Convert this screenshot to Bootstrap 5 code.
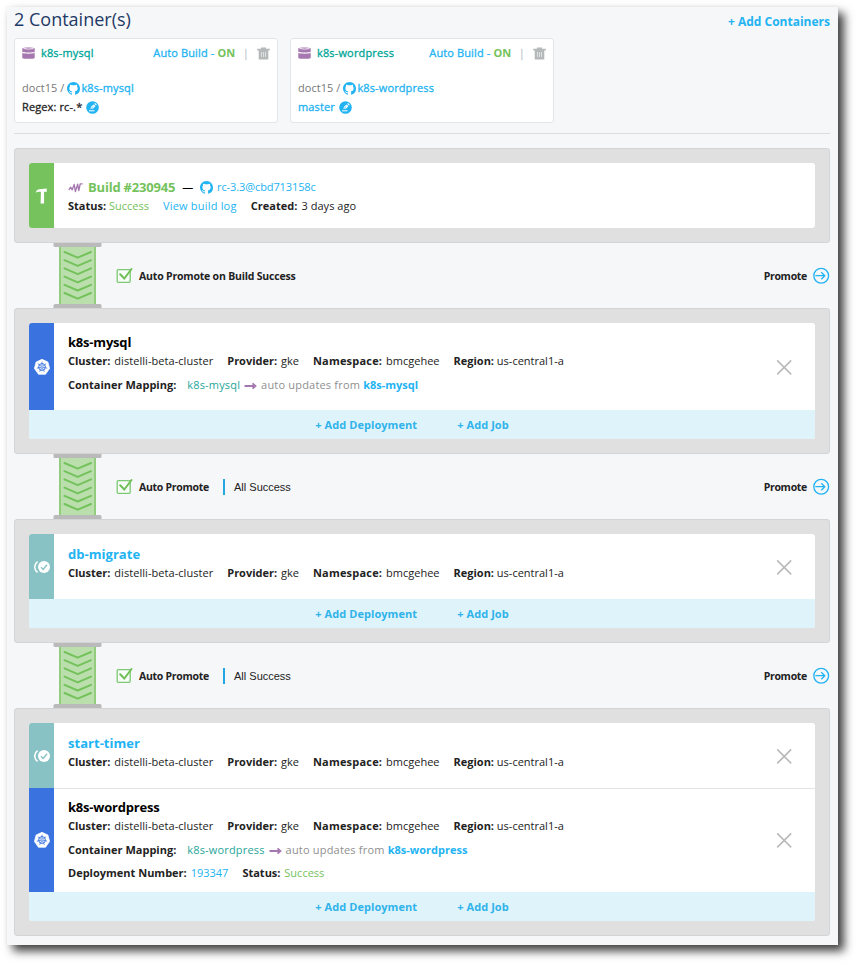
<!DOCTYPE html>
<html lang="en">
<head>
<meta charset="utf-8">
<meta name="viewport" content="width=device-width, initial-scale=1">
<title>Pipeline</title>
<link href="https://cdn.jsdelivr.net/npm/bootstrap@5.3.0/dist/css/bootstrap.min.css" rel="stylesheet">
<style>
body{background:#fff;font-family:"Open Sans","Noto Sans",sans-serif;font-size:11px;line-height:18px;color:#222;min-height:968px;padding:7px 0 0 7px}
a{text-decoration:none;color:#22b3f2}
svg{display:block;flex:none}
.panel{width:831px;height:938px;padding:0 8px 0 7px;background:#f6f7f9;box-shadow:6px 6px 9px rgba(0,0,0,.75),0 0 5px rgba(0,0,0,.05)}
.page-title{font-size:18px;line-height:24px;height:26px;color:#1e3a66;font-weight:400}
.add-top{font-size:12px;font-weight:700;padding-top:6px;height:26px}
.repos{gap:12px;padding-top:5px}
.repo{width:264px;height:85px;border:1px solid #e3e5e7;border-radius:3px;padding:5px 7px 0;letter-spacing:.12px;-webkit-text-stroke:.3px currentColor}
.repo b{-webkit-text-stroke:0}
.repo .name{color:#00a698;padding-left:6px;letter-spacing:.15px}
.repo .sep{color:#c6cdd4;margin:0 8px 0 7.500px}
.row2{margin-top:17px}.row3{margin-top:1px}
.owner{-webkit-text-stroke:0;letter-spacing:.05px}
.gh-link{margin-left:1px}
.gh-ico{margin-left:3px}
.teal{color:#1fa699}.grn{color:#74c25c}.gry{color:#777}.gry2{color:#8f8f8f}
.rule{height:1px;background:#dbdddf;margin:10px 0 14px}
.stage{background:#e0e0e0;border:1px solid #d2d4d6;border-radius:3px;padding:14px}
.box{border-radius:3px;overflow:hidden;background:#fff}
.side{width:25px;flex:none}
.side.build{background:#76c25d}.side.kube{background:#3a72e0}.side.job{background:#88c2c4}
.line{height:18px;white-space:nowrap}
.info{padding-left:14px;padding-top:9px}
.build-info{padding-top:14px}.job-info{padding-top:10px}
.h65{height:65px}.h87{height:87px}.h104{height:104px}
.ttl{font-size:13px;font-weight:700;color:#000;height:20px;line-height:20px;letter-spacing:-.2px}
.ttl a{letter-spacing:.03px}
.ttl .grn{margin-left:1px}
.ttl .sha{font-size:11px;font-weight:400;letter-spacing:-.1px}
.dash{font-size:11px;font-weight:400;margin:0 7px}
.g14{gap:14px}
.meta b{margin-right:1px}
.meta .val{letter-spacing:.05px}
.meta .ns{letter-spacing:.2px}
.meta .st{margin-right:0}
.log{letter-spacing:.2px}
.mapping{margin-top:6px}
.mapping b{margin-right:11px}
.mapping .teal{letter-spacing:.17px}
.mapping .gry2{letter-spacing:.19px}
.mapping svg{margin:1px 4px 0}
.deploy{margin-top:5px}
.addbar{height:29px;background:#dff3fb;gap:40px;font-weight:700;padding-right:20px;letter-spacing:.07px}
.addbar a{color:#2fb3ea}
.link{height:65px;padding-left:39px}
.link b{font-size:10.5px;letter-spacing:-.19px}
.link .pipe{margin-right:14px}
.link .lbl{margin-left:6px}
.link .short{letter-spacing:-.28px}
.link .prm{letter-spacing:-.3px}
.link .go{margin-left:6px}
.vbar{width:2px;height:16px;background:#22a7e0;margin:0 9px 0 14px}
.arial{font-family:"Liberation Sans",Arial,sans-serif}
.close-x{margin-right:23px}
.split{box-shadow:inset 0 1px #e2e4e6}
</style>
</head>
<body>
<svg width="0" height="0" class="position-absolute">
<defs>
<symbol id="gh" viewBox="0 0 16 16"><path fill="#22b3f2" d="M8 0C3.58 0 0 3.58 0 8c0 3.54 2.29 6.53 5.47 7.59.4.07.55-.17.55-.38 0-.19-.01-.82-.01-1.49-2.01.37-2.53-.49-2.69-.94-.09-.23-.48-.94-.82-1.13-.28-.15-.68-.52-.01-.53.63-.01 1.08.58 1.23.82.72 1.21 1.87.87 2.33.66.07-.52.28-.87.51-1.07-1.78-.2-3.64-.89-3.64-3.95 0-.87.31-1.59.82-2.15-.08-.2-.36-1.02.08-2.12 0 0 .67-.21 2.2.82.64-.18 1.32-.27 2-.27s1.36.09 2 .27c1.53-1.04 2.2-.82 2.2-.82.44 1.1.16 1.92.08 2.12.51.56.82 1.27.82 2.15 0 3.07-1.87 3.75-3.65 3.95.29.25.54.73.54 1.48 0 1.07-.01 1.93-.01 2.2 0 .21.15.46.55.38A8.01 8.01 0 0 0 16 8c0-4.42-3.58-8-8-8z"/></symbol>
<symbol id="db" viewBox="0 0 13 12"><path fill="#a678b0" d="M.3 1.300C1 .2 12 .2 12.700 1.300V5C11 5.600 2 5.600.3 5zM.3 6.100C3 6.900 10 6.900 12.700 6.100V10.900C11 12.100 2 12.100.3 10.900z"/><path d="M1.500 1.500Q6.500 2.700 11.500 1.500" stroke="#f1e8f3" stroke-width="1" fill="none"/></symbol>
<symbol id="trash" viewBox="0 0 13 13"><path fill="#b5b9ba" d="M4 .5h5v1.300h3.800v1.600H.2V1.800H4zM1.700 3.400h9.600V12.500H1.700z"/><path d="M4.500 5v5M6.500 5v5M8.500 5v5" stroke="#e9ebeb" stroke-width=".8"/></symbol>
<symbol id="edit" viewBox="0 0 13 13"><circle cx="6.500" cy="6.500" r="6.300" fill="#22b3f2"/><path d="M4.200 8.300L5.200 5.600L7.600 3.400L9.500 5L7.200 7.600zM8.200 2.800L9 2.100L10.800 3.700L10.100 4.500z" fill="#fff"/><path d="M3 9.800H8.500" stroke="#fff" stroke-width="1"/><path d="M4.500 8L7.300 5.400" stroke="#22b3f2" stroke-width=".7"/></symbol>
<symbol id="pulse" viewBox="0 0 15 11"><path d="M.8 8L2.600 5.200L4.200 7.800L6.200 2.500L7.400 9.600L9.600 2.200L10.800 8.500L12.200 1.800H14.600" fill="none" stroke="#a678b0" stroke-width="1.350" stroke-linejoin="round"/></symbol>
<symbol id="hammer" viewBox="0 0 13 18"><path fill="#fff" d="M.8 5.900C1.100 3.300 2.500 2.300 4.500 2.200L11.700 1.400V5.200L10.500 4.700H9.100V16.500H5.600L5.900 4.900C3.500 4.700 1.900 5.100.8 5.900z"/></symbol>
<symbol id="kube" viewBox="0 0 16 16"><path d="M8 .3L13.900 3L15.600 9.400L11.500 15.300H4.500L.4 9.400L2.100 3z" fill="#fff" stroke="#fff" stroke-width=".7" stroke-linejoin="round"/><g stroke="#3a72e0" fill="none"><circle cx="8" cy="8" r="3.400" stroke-width="1"/><path d="M8 2.700V7M8 8L12.200 4.600M8 8L13.200 9.200M8 8L10.400 12.800M8 8L5.600 12.800M8 8L2.800 9.200M8 8L3.800 4.600" stroke-width=".8"/></g><circle cx="8" cy="8" r=".7" fill="#fff"/></symbol>
<symbol id="job" viewBox="0 0 16 14"><path d="M3.600 1.600A6.500 6.500 0 0 0 3.600 12.400" stroke="#fff" stroke-width="1.500" fill="none"/><circle cx="10" cy="7" r="6" fill="#fff"/><path d="M7 7.200L9.200 9.400L13 4.700" stroke="#88c2c4" stroke-width="1.400" fill="none"/></symbol>
<symbol id="pipe" viewBox="0 0 49 65"><rect x="6" y="2" width="37" height="61" fill="#badfac"/><path d="M7 2V63M42 2V63" stroke="#92cd7e" stroke-width="2"/><path d="M.5 0H48.500V2.500Q48.500 4 47 4H2Q.5 4 .5 2.500zM.5 65H48.500V62.500Q48.500 61 47 61H2Q.5 61 .5 62.500z" fill="#bababa"/><path d="M11.500 9L24.700 14.700L38 9M11.500 17.200L24.700 22.900L38 17.200M11.500 25.400L24.700 31.100L38 25.400M11.500 33.600L24.700 39.300L38 33.600M11.500 41.800L24.700 47.500L38 41.800M11.500 50L24.700 55.700L38 50" fill="none" stroke="#74c25c" stroke-width="2" stroke-linecap="round" stroke-linejoin="round"/></symbol>
<symbol id="check" viewBox="0 0 17 17"><rect x="1.200" y="2.700" width="13" height="12.600" rx="1" fill="#f8fcf8" stroke="#7cc873" stroke-width="1.300"/><path d="M4.200 7.200L8.300 11.500L15.500 2" fill="none" stroke="#6fbf57" stroke-width="2" stroke-linecap="round"/></symbol>
<symbol id="go" viewBox="0 0 17 17"><circle cx="8.200" cy="8.700" r="7.400" fill="none" stroke="#22b3f2" stroke-width="1.300"/><path d="M2.300 8.700H11.800M8.300 5.200L11.800 8.700L8.300 12.200" fill="none" stroke="#22b3f2" stroke-width="1.300"/></symbol>
<symbol id="x" viewBox="0 0 16 16"><path d="M1.200 1.400L15.200 15.400M15.200 1.400L1.200 15.400" stroke="#b9b9b9" stroke-width="1.500"/></symbol>
<symbol id="arr" viewBox="0 0 13 8"><path d="M.5 4H11.500M8.500 1.300L11.500 4L8.500 6.700" fill="none" stroke="#a678b0" stroke-width="1.800"/></symbol>
</defs>
</svg>

<main class="panel">
  <header class="d-flex justify-content-between">
    <h1 class="page-title mb-0">2 Container(s)</h1>
    <a href="#" class="add-top">+ Add Containers</a>
  </header>
  <section class="repos d-flex">
    <div class="repo bg-white">
      <div class="line d-flex align-items-center"><svg width="13" height="12"><use href="#db"/></svg><span class="name me-auto">k8s-mysql</span><a href="#">Auto Build - <b class="grn">ON</b></a><span class="sep">|</span><svg width="13" height="13"><use href="#trash"/></svg></div>
      <div class="line d-flex align-items-center row2"><span class="gry owner">doct15 /</span><svg width="13" height="13" class="gh-ico"><use href="#gh"/></svg><a href="#" class="gh-link">k8s-mysql</a></div>
      <div class="line d-flex align-items-center row3"><span>Regex: rc-.*</span><svg width="13" height="13" class="ms-1"><use href="#edit"/></svg></div>
    </div>
    <div class="repo bg-white">
      <div class="line d-flex align-items-center"><svg width="13" height="12"><use href="#db"/></svg><span class="name me-auto">k8s-wordpress</span><a href="#">Auto Build - <b class="grn">ON</b></a><span class="sep">|</span><svg width="13" height="13"><use href="#trash"/></svg></div>
      <div class="line d-flex align-items-center row2"><span class="gry owner">doct15 /</span><svg width="13" height="13" class="gh-ico"><use href="#gh"/></svg><a href="#" class="gh-link">k8s-wordpress</a></div>
      <div class="line d-flex align-items-center row3"><a href="#">master</a><svg width="13" height="13" class="ms-1"><use href="#edit"/></svg></div>
    </div>
  </section>
  <div class="rule"></div>

  <section class="stage"><div class="box d-flex h65">
    <div class="side build d-flex align-items-center justify-content-center"><svg width="13" height="18"><use href="#hammer"/></svg></div>
    <div class="info build-info">
      <div class="ttl d-flex align-items-center"><svg width="15" height="11" class="me-1"><use href="#pulse"/></svg><span class="grn">Build #230945</span><span class="dash">—</span><svg width="13" height="13" class="me-1"><use href="#gh"/></svg><a href="#" class="sha">rc-3.3@cbd713158c</a></div>
      <div class="line d-flex g14 meta"><span><b class="st">Status:</b> <span class="grn">Success</span></span><a href="#" class="log">View build log</a><span><b class="val">Created:</b> <span class="val">3 days ago</span></span></div>
    </div>
  </div></section>

  <div class="link d-flex align-items-center"><svg class="pipe" width="49" height="65"><use href="#pipe"/></svg><svg width="17" height="17"><use href="#check"/></svg><b class="lbl">Auto Promote on Build Success</b><b class="ms-auto prm">Promote</b><svg width="17" height="17" class="go"><use href="#go"/></svg></div>

  <section class="stage"><div class="box">
    <div class="d-flex h87">
      <div class="side kube d-flex align-items-center justify-content-center"><svg width="16" height="16"><use href="#kube"/></svg></div>
      <div class="info">
        <div class="ttl">k8s-mysql</div>
        <div class="line d-flex g14 meta"><span><b>Cluster:</b> <span class="val">distelli-beta-cluster</span></span><span><b>Provider:</b> gke</span><span><b class="ns">Namespace:</b> bmcgehee</span><span><b class="st">Region:</b> us-central1-a</span></div>
        <div class="line d-flex align-items-center mapping"><b>Container Mapping:</b><span class="teal">k8s-mysql</span><svg width="13" height="8"><use href="#arr"/></svg><span class="gry2">auto updates from&nbsp;</span><a href="#" class="fw-bold">k8s-mysql</a></div>
      </div>
      <svg class="ms-auto align-self-center close-x" width="16" height="16"><use href="#x"/></svg>
    </div>
    <div class="addbar d-flex align-items-center justify-content-center"><a href="#">+ Add Deployment</a><a href="#">+ Add Job</a></div>
  </div></section>

  <div class="link d-flex align-items-center"><svg class="pipe" width="49" height="65"><use href="#pipe"/></svg><svg width="17" height="17"><use href="#check"/></svg><b class="lbl short">Auto Promote</b><span class="vbar"></span><span class="arial">All Success</span><b class="ms-auto prm">Promote</b><svg width="17" height="17" class="go"><use href="#go"/></svg></div>

  <section class="stage"><div class="box">
    <div class="d-flex h65">
      <div class="side job d-flex align-items-center justify-content-center"><svg width="16" height="14"><use href="#job"/></svg></div>
      <div class="info job-info">
        <div class="ttl"><a href="#">db-migrate</a></div>
        <div class="line d-flex g14 meta"><span><b>Cluster:</b> <span class="val">distelli-beta-cluster</span></span><span><b>Provider:</b> gke</span><span><b class="ns">Namespace:</b> bmcgehee</span><span><b class="st">Region:</b> us-central1-a</span></div>
      </div>
      <svg class="ms-auto align-self-center close-x" width="16" height="16"><use href="#x"/></svg>
    </div>
    <div class="addbar d-flex align-items-center justify-content-center"><a href="#">+ Add Deployment</a><a href="#">+ Add Job</a></div>
  </div></section>

  <div class="link d-flex align-items-center"><svg class="pipe" width="49" height="65"><use href="#pipe"/></svg><svg width="17" height="17"><use href="#check"/></svg><b class="lbl short">Auto Promote</b><span class="vbar"></span><span class="arial">All Success</span><b class="ms-auto prm">Promote</b><svg width="17" height="17" class="go"><use href="#go"/></svg></div>

  <section class="stage"><div class="box">
    <div class="d-flex h65">
      <div class="side job d-flex align-items-center justify-content-center"><svg width="16" height="14"><use href="#job"/></svg></div>
      <div class="info job-info">
        <div class="ttl"><a href="#">start-timer</a></div>
        <div class="line d-flex g14 meta"><span><b>Cluster:</b> <span class="val">distelli-beta-cluster</span></span><span><b>Provider:</b> gke</span><span><b class="ns">Namespace:</b> bmcgehee</span><span><b class="st">Region:</b> us-central1-a</span></div>
      </div>
      <svg class="ms-auto align-self-center close-x" width="16" height="16"><use href="#x"/></svg>
    </div>
    <div class="d-flex h104 split">
      <div class="side kube d-flex align-items-center justify-content-center"><svg width="16" height="16"><use href="#kube"/></svg></div>
      <div class="info">
        <div class="ttl">k8s-wordpress</div>
        <div class="line d-flex g14 meta"><span><b>Cluster:</b> <span class="val">distelli-beta-cluster</span></span><span><b>Provider:</b> gke</span><span><b class="ns">Namespace:</b> bmcgehee</span><span><b class="st">Region:</b> us-central1-a</span></div>
        <div class="line d-flex align-items-center mapping"><b>Container Mapping:</b><span class="teal">k8s-wordpress</span><svg width="13" height="8"><use href="#arr"/></svg><span class="gry2">auto updates from&nbsp;</span><a href="#" class="fw-bold">k8s-wordpress</a></div>
        <div class="line d-flex g14 meta deploy"><span><b>Deployment Number:</b> <a href="#">193347</a></span><span><b>Status:</b> <span class="grn">Success</span></span></div>
      </div>
      <svg class="ms-auto align-self-center close-x" width="16" height="16"><use href="#x"/></svg>
    </div>
    <div class="addbar d-flex align-items-center justify-content-center"><a href="#">+ Add Deployment</a><a href="#">+ Add Job</a></div>
  </div></section>
</main>
<script src="https://cdn.jsdelivr.net/npm/bootstrap@5.3.0/dist/js/bootstrap.bundle.min.js"></script>
</body>
</html>
